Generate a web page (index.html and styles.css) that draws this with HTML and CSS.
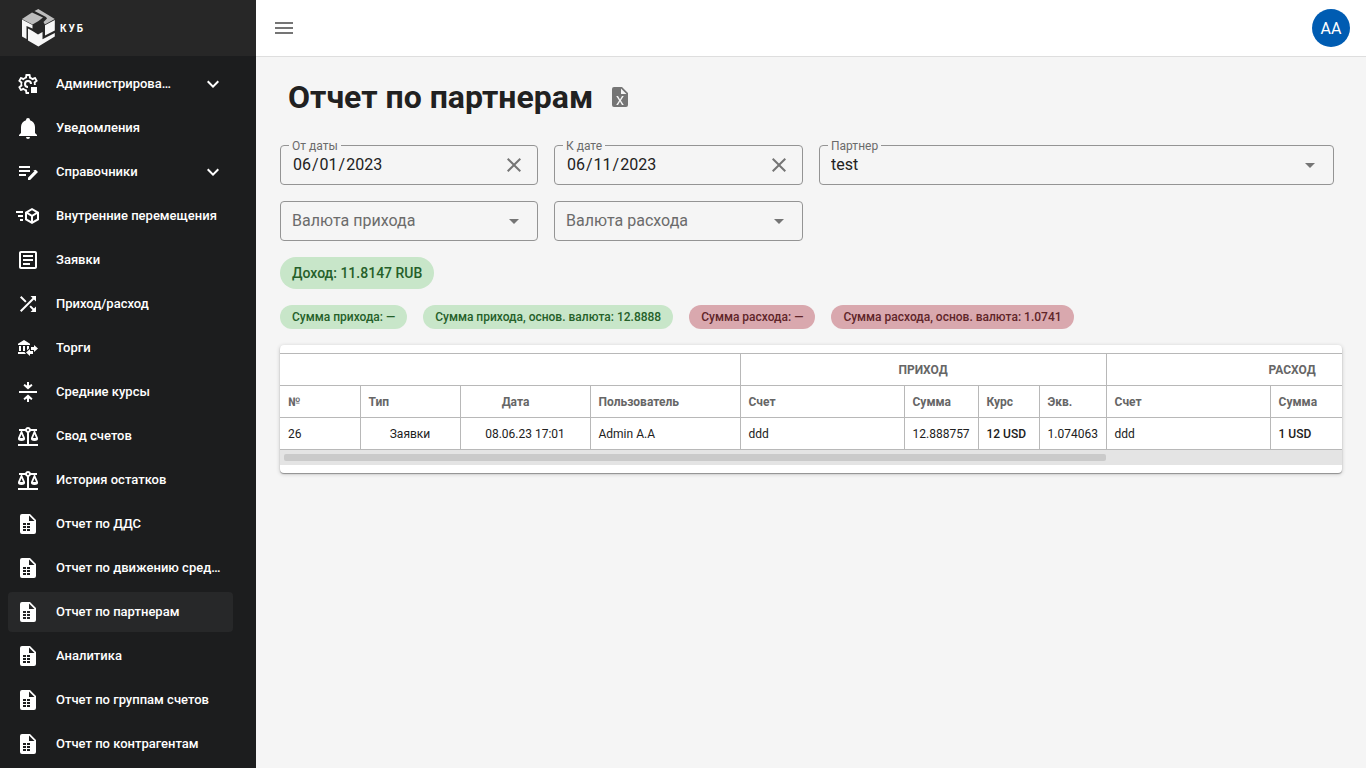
FILE: index.html
```html
<!DOCTYPE html>
<html lang="ru">
<head>
<meta charset="utf-8">
<title>Отчет по партнерам</title>
<link rel="stylesheet" href="styles.css">
</head>
<body>
<svg class="sprite" aria-hidden="true">
  <symbol id="i-cog" viewBox="0 0 24 24"><path d="M12 8a4 4 0 0 0-4 4 4 4 0 0 0 4 4v-2a2 2 0 1 1 2-2h2a4 4 0 0 0-4-4M10 2c-.25 0-.46.18-.5.42l-.37 2.65c-.63.25-1.17.59-1.69.98L4.95 5.05c-.22-.08-.49 0-.61.22l-2 3.46c-.13.22-.07.49.12.64l2.110 1.65L4.500 12l.07 1-2.110 1.63c-.19.15-.25.42-.12.64l2 3.460c.12.22.39.3.61.22l2.490-1.010c.52.4 1.060.74 1.690.99l.37 2.650c.04.24.25.42.5.42H13v-2h-1.750l-.37-2.390A5.500 5.500 0 0 1 7.500 15.710l-2.260.97-.75-1.300 1.980-1.460a5.300 5.300 0 0 1 0-3.830L4.490 8.620l.75-1.300 2.250.97c.85-1 2.040-1.710 3.390-1.920L11.250 4h1.500l.37 2.380c1.350.2 2.540.91 3.380 1.910l2.260-.97.75 1.300-1.980 1.470c.3.75.44 1.300.37 2.910h2l-.42-2 2.060-1.630c.19-.15.25-.42.12-.64l-2-3.460c-.12-.22-.39-.3-.61-.22l-2.490 1c-.52-.39-1.060-.73-1.690-.98l-.37-2.650A.5.500 0 0 0 14 2zM15 15h6v6h-6z"/></symbol>
  <symbol id="i-bell" viewBox="0 0 24 24"><path d="M21 19v1H3v-1l2-2v-6c0-3.100 2.030-5.830 5-6.710V4a2 2 0 0 1 4 0v.29c2.970.88 5 3.610 5 6.710v6l2 2M14 21a2 2 0 0 1-4 0"/></symbol>
  <symbol id="i-note" viewBox="0 0 24 24"><path d="M3 11h13V9H3zm0-4h13V5H3zM3 15h8v-2H3z" opacity="0"/><path d="M3 10h11v2H3v-2zm0-2h11V6H3v2zm0 8h7v-2H3v2zM18.600 10.300c.4-.4 1-.4 1.400 0l1.700 1.700-1.300 1.400-3.100-3.100zM19.700 9.800L22 12.100 14.100 20H12v-2.300z"/></symbol>
  <symbol id="i-cube" viewBox="0 0 24 24"><path d="M16 4L9 8.040V15.960L16 20L23 15.960V8.040M16 6.310L19.800 8.500L16 10.690L12.210 8.500M0 7V9H7V7M11 10.110L15 12.420V17.110L11 14.810M21 10.110V14.810L17 17.110V12.420M2 11V13H7V11M4 15V17H7V15"/></symbol>
  <symbol id="i-article" viewBox="0 0 24 24"><path d="M19 5v14H5V5h14m0-2H5c-1.100 0-2 .9-2 2v14c0 1.100.9 2 2 2h14c1.100 0 2-.9 2-2V5c0-1.100-.9-2-2-2zm-5 14H7v-2h7v2zm3-4H7v-2h10v2zm0-4H7V7h10v2z"/></symbol>
  <symbol id="i-shuffle" viewBox="0 0 24 24"><path d="M10.590 9.170L5.410 4 4 5.410l5.170 5.170 1.420-1.410zM14.500 4l2.040 2.040L4 18.590 5.410 20 17.960 7.460 20 9.500V4h-5.500zm.33 9.410l-1.410 1.410 3.130 3.130L14.500 20H20v-5.500l-2.040 2.040-3.130-3.130z"/></symbol>
  <symbol id="i-bank" viewBox="0 0 24 24"><path d="M15 14V11H18V9L22 12.500L18 16V14H15M14 7.700V9H2V7.700L8 4L14 7.700M7 10H9V15H7V10M3 10H5V15H3V10M13 10V12.500L11 14.300V10H13M9.100 16L8.500 16.500L10.200 18H2V16H9.100M17 15V18H14V20L10 16.500L14 13V15H17Z"/></symbol>
  <symbol id="i-center" viewBox="0 0 24 24"><path d="M3 11h18v2H3zM11 2h2v3.500l2.500-1.500 1 1.500L12 9.500 7.500 5.500l1-1.500L11 5.500zM11 22h2v-3.500l2.500 1.500 1-1.500L12 14.500l-4.500 4 1 1.500 2.500-1.500z"/></symbol>
  <symbol id="i-scale" viewBox="0 0 24 24"><path d="M12 3C10.730 3 9.600 3.800 9.180 5H3V7H4.950L2 14C1.530 16 3 17 5.500 17C8 17 9.560 16 9 14L6.050 7H9.170C9.500 7.850 10.150 8.500 11 8.830V20H2V22H22V20H13V8.820C13.850 8.500 14.500 7.850 14.820 7H17.950L15 14C14.530 16 16 17 18.500 17C21 17 22.560 16 22 14L19.050 7H21V5H14.830C14.400 3.800 13.270 3 12 3M12 5A1 1 0 0 1 13 6A1 1 0 0 1 12 7A1 1 0 0 1 11 6A1 1 0 0 1 12 5M5.500 10.250L7 14H4L5.500 10.250M18.500 10.250L20 14H17L18.500 10.250Z"/></symbol>
  <symbol id="i-file" viewBox="0 0 24 24"><path fill-rule="evenodd" d="M14 2H6a2 2 0 0 0-2 2v16a2 2 0 0 0 2 2h12a2 2 0 0 0 2-2V8zM13 3.500L18.500 9H13zM7 11h3v2H7zM11 11h3v2h-3zM7 14h3v2H7zM11 14h3v2h-3zM7 17h3v2H7zM11 17h3v2h-3z"/></symbol>
  <symbol id="i-down" viewBox="0 0 24 24"><path d="M7.410 8.580L12 13.170l4.590-4.590L18 10l-6 6-6-6z"/></symbol>
  <symbol id="i-close" viewBox="0 0 24 24"><path d="M19 6.410L17.590 5 12 10.590 6.410 5 5 6.410 10.590 12 5 17.590 6.410 19 12 13.410 17.590 19 19 17.590 13.410 12z"/></symbol>
  <symbol id="i-caret" viewBox="0 0 24 24"><path d="M7 10l5 5 5-5z"/></symbol>
</svg>

<div class="app">
  <aside class="sidebar">
    <div class="brand">
      <svg class="brand-mark" viewBox="0 0 33 38" aria-hidden="true">
        <path fill="#bdbdbd" d="M0 10L10 3.500l11 5-4.500 3.500-6 3.500z"/>
        <path fill="#bdbdbd" d="M12.500 2L16.300 0l16.500 10-10 5.500-1.300-2.500L25 9.500 24 8z"/>
        <path fill="#f7f7f7" d="M0 10.500L10.500 16v3.500L4.500 17v13L0 27.500z"/>
        <path fill="#f7f7f7" d="M32.800 11v10.500L23 26.500V16.200z"/>
        <path fill="#f7f7f7" d="M6 19.500l4.500 2.500 5.500 3.500 4.500-2.500v7.200l12.300-6.200v3.500L16.400 37.500 6 31.500z"/>
      </svg>
      <span class="brand-name">КУБ</span>
    </div>
    <nav class="menu">
      <a class="item" href="#"><svg class="icon"><use href="#i-cog"/></svg><span class="text">Администрирование</span><svg class="icon chevron"><use href="#i-down"/></svg></a>
      <a class="item" href="#"><svg class="icon"><use href="#i-bell"/></svg><span class="text">Уведомления</span></a>
      <a class="item" href="#"><svg class="icon"><use href="#i-note"/></svg><span class="text">Справочники</span><svg class="icon chevron"><use href="#i-down"/></svg></a>
      <a class="item" href="#"><svg class="icon"><use href="#i-cube"/></svg><span class="text">Внутренние перемещения</span></a>
      <a class="item" href="#"><svg class="icon"><use href="#i-article"/></svg><span class="text">Заявки</span></a>
      <a class="item" href="#"><svg class="icon"><use href="#i-shuffle"/></svg><span class="text">Приход/расход</span></a>
      <a class="item" href="#"><svg class="icon"><use href="#i-bank"/></svg><span class="text">Торги</span></a>
      <a class="item" href="#"><svg class="icon"><use href="#i-center"/></svg><span class="text">Средние курсы</span></a>
      <a class="item" href="#"><svg class="icon"><use href="#i-scale"/></svg><span class="text">Свод счетов</span></a>
      <a class="item" href="#"><svg class="icon"><use href="#i-scale"/></svg><span class="text">История остатков</span></a>
      <a class="item" href="#"><svg class="icon"><use href="#i-file"/></svg><span class="text">Отчет по ДДС</span></a>
      <a class="item" href="#"><svg class="icon"><use href="#i-file"/></svg><span class="text">Отчет по движению средств</span></a>
      <a class="item active" href="#" aria-current="page"><svg class="icon"><use href="#i-file"/></svg><span class="text">Отчет по партнерам</span></a>
      <a class="item" href="#"><svg class="icon"><use href="#i-file"/></svg><span class="text">Аналитика</span></a>
      <a class="item" href="#"><svg class="icon"><use href="#i-file"/></svg><span class="text">Отчет по группам счетов</span></a>
      <a class="item" href="#"><svg class="icon"><use href="#i-file"/></svg><span class="text">Отчет по контрагентам</span></a>
    </nav>
  </aside>

  <div class="page">
    <header class="topbar">
      <button class="icon-button" type="button" aria-label="Меню"><svg class="icon" viewBox="0 0 24 24"><path d="M3 18h18v-2H3zm0-5h18v-2H3zm0-7v2h18V6z"/></svg></button>
      <button class="avatar" type="button">AA</button>
    </header>

    <main class="content">
      <div class="heading">
        <h1 class="title">Отчет по партнерам</h1>
        <button class="icon-button" type="button" aria-label="Скачать Excel"><svg class="icon" viewBox="0 0 24 24"><path fill-rule="evenodd" d="M14 2H6a2 2 0 0 0-2 2v16a2 2 0 0 0 2 2h12a2 2 0 0 0 2-2V8zM13 3.500L18.500 9H13zM15.800 20H14l-2-3.400L10 20H8.200l2.900-4.500L8.200 11H10l2 3.400 2-3.400h1.800l-2.900 4.500z"/></svg></button>
      </div>

      <form class="filters">
        <div class="field">
          <label class="label" for="from">От даты</label>
          <input class="control" id="from" type="date" value="2023-06-01">
          <button class="clear" type="button" aria-label="Очистить"><svg class="icon"><use href="#i-close"/></svg></button>
        </div>
        <div class="field">
          <label class="label" for="to">К дате</label>
          <input class="control" id="to" type="date" value="2023-06-11">
          <button class="clear" type="button" aria-label="Очистить"><svg class="icon"><use href="#i-close"/></svg></button>
        </div>
        <div class="field">
          <label class="label" for="partner">Партнер</label>
          <select class="control" id="partner"><option>test</option></select>
          <svg class="icon caret"><use href="#i-caret"/></svg>
        </div>
        <div class="field">
          <select class="control empty" aria-label="Валюта прихода"><option>Валюта прихода</option></select>
          <svg class="icon caret"><use href="#i-caret"/></svg>
        </div>
        <div class="field">
          <select class="control empty" aria-label="Валюта расхода"><option>Валюта расхода</option></select>
          <svg class="icon caret"><use href="#i-caret"/></svg>
        </div>
      </form>

      <div class="chips">
        <span class="chip large">Доход: 11.8147 RUB</span>
      </div>
      <div class="chips">
        <span class="chip">Сумма прихода: —</span>
        <span class="chip">Сумма прихода, основ. валюта: 12.8888</span>
        <span class="chip expense">Сумма расхода: —</span>
        <span class="chip expense">Сумма расхода, основ. валюта: 1.0741</span>
      </div>

      <section class="card">
        <div class="scroller">
          <table class="report">
            <colgroup>
              <col class="w80"><col class="w100"><col class="w130"><col class="w150">
              <col class="w164"><col class="w74"><col class="w61"><col class="w67">
              <col class="w164"><col class="w74"><col class="w67"><col class="w67"><col class="w164">
            </colgroup>
            <thead>
              <tr><th colspan="4"></th><th class="mid" colspan="4">ПРИХОД</th><th class="mid" colspan="4">РАСХОД</th><th></th></tr>
              <tr><th>№</th><th>Тип</th><th class="mid sortable">Дата</th><th>Пользователь</th><th>Счет</th><th>Сумма</th><th>Курс</th><th>Экв.</th><th>Счет</th><th>Сумма</th><th></th><th></th><th></th></tr>
            </thead>
            <tbody>
              <tr><td>26</td><td class="mid">Заявки</td><td class="mid">08.06.23 17:01</td><td>Admin A.A</td><td>ddd</td><td>12.888757</td><td class="strong">12 USD</td><td>1.074063</td><td>ddd</td><td class="strong">1 USD</td><td></td><td></td><td></td></tr>
            </tbody>
          </table>
        </div>
        <div class="scrollbar" aria-hidden="true"><div class="thumb"></div></div>
      </section>
    </main>
  </div>
</div>
</body>
</html>
```

FILE: styles.css
```css
* { box-sizing: border-box; }

body {
  margin: 0;
  font-family: Roboto, "Noto Sans", sans-serif;
  font-size: 16px;
  color: #212121;
  background: #f5f5f5;
}

button { padding: 0; border: 0; background: none; font: inherit; cursor: pointer; }

.sprite { display: none; }
.icon { width: 24px; height: 24px; flex: none; fill: currentColor; }

.app { display: flex; height: 100vh; overflow: hidden; }

.sidebar {
  width: 256px;
  flex: none;
  display: flex;
  flex-direction: column;
  background: #1c1d1e;
  color: #fff;
}

.brand {
  height: 56px;
  flex: none;
  display: flex;
  align-items: center;
  gap: 5px;
  padding-left: 22px;
  background: #272727;
}
.brand-mark { width: 33px; height: 38px; }
.brand-name { font-size: 10px; font-weight: 700; letter-spacing: 2px; }

.menu {
  flex: 1;
  min-height: 0;
  overflow: hidden;
  display: flex;
  flex-direction: column;
  gap: 4px;
  padding: 8px 23px 8px 8px;
}
.item {
  height: 40px;
  flex: none;
  display: flex;
  align-items: center;
  padding: 0 8px;
  border-radius: 4px;
  color: inherit;
  text-decoration: none;
  font-size: 13px;
  font-weight: 500;
  line-height: 20px;
}
.item.active { background: #272829; }
.text {
  flex: 1;
  min-width: 0;
  margin-left: 16px;
  overflow: hidden;
  white-space: nowrap;
  text-overflow: ellipsis;
}
.chevron { margin-left: 28px; }

.page { flex: 1; min-width: 0; display: flex; flex-direction: column; }

.topbar {
  height: 57px;
  flex: none;
  display: flex;
  align-items: center;
  justify-content: space-between;
  padding: 0 16px;
  background: #fff;
  border-bottom: 1px solid #dedede;
}
.icon-button { display: flex; color: #757575; }
.avatar {
  width: 38px;
  height: 38px;
  border-radius: 50%;
  background: #005cb2;
  color: #fff;
}

.content {
  flex: 1;
  display: flex;
  flex-direction: column;
  gap: 16px;
  padding: 16px 24px;
}

.heading { display: flex; align-items: center; gap: 15px; padding-left: 8px; margin-bottom: 8px; }
.title { margin: 0; font-size: 32px; line-height: 48px; font-weight: 700; }

.filters {
  display: grid;
  grid-template-columns: 258fr 249fr 515fr;
  gap: 16px;
  padding-right: 8px;
}
.field { position: relative; display: flex; }
.label {
  position: absolute;
  top: -7px;
  left: 9px;
  padding: 0 3px;
  background: #f5f5f5;
  color: #6b6b6b;
  font-size: 12px;
  line-height: 16px;
}
.control {
  width: 100%;
  height: 40px;
  padding: 0 40px 2px 11px;
  border: 1px solid #949494;
  border-radius: 4px;
  appearance: none;
  background: none;
  font: inherit;
  color: inherit;
}
.control.empty { color: #6b6b6b; }
.control::-webkit-calendar-picker-indicator { display: none; }
.clear, .caret { position: absolute; top: 8px; right: 12px; color: #757575; }
.clear { display: flex; }

.chips { display: flex; gap: 16px; }
.chip {
  padding: 0 12px;
  border-radius: 16px;
  background: #c8e6c9;
  color: #256029;
  font-size: 12px;
  line-height: 24px;
  font-weight: 500;
}
.chip.large { font-size: 14px; line-height: 32px; }
.chip.expense { background: #d9a8ae; color: #602529; }

.card {
  padding: 8px 0;
  border-radius: 4px;
  background: #fff;
  box-shadow: 0 1px 1px rgba(0, 0, 0, 0.34), 0 1px 4px rgba(0, 0, 0, 0.2);
}
.scroller { overflow-x: auto; scrollbar-width: none; }
.scrollbar { height: 15px; padding: 4px; background: #e4e4e4; }
.thumb { width: 78%; height: 7px; border-radius: 2px; background: #cacaca; }

.report {
  width: 1362px;
  table-layout: fixed;
  border-collapse: collapse;
  font-size: 12px;
  line-height: 16px;
}
.report th, .report td {
  height: 32px;
  padding: 0 8px;
  border: 1px solid #b8b8b8;
  text-align: left;
  white-space: nowrap;
}
.report th:first-child, .report td:first-child { border-left: 0; }
.report th { color: #666; font-weight: 700; }
.report .mid { text-align: center; }
.report .sortable { padding-right: 27px; }
.report .strong { font-weight: 500; }
.w61 { width: 61px; }
.w67 { width: 67px; }
.w74 { width: 74px; }
.w80 { width: 80px; }
.w100 { width: 100px; }
.w130 { width: 130px; }
.w150 { width: 150px; }
.w164 { width: 164px; }
```
